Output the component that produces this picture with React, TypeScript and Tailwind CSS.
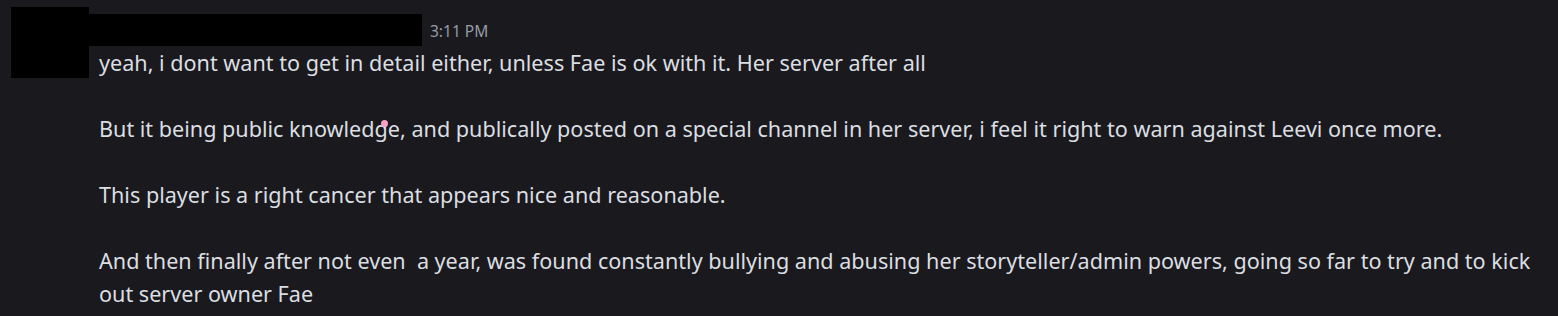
export default function App() {
  return (
    <main
      className="relative h-[316px] w-[1558px] overflow-hidden bg-[#1a1a1e] text-[#dbdee1]"
      style={{ fontFamily: '"Noto Sans", "Open Sans", sans-serif' }}
    >
      <div className="flex">
        <div className="ml-[11px] mt-[7px] h-[71px] w-[78px] shrink-0 bg-black" />

        <div className="flex flex-col">
          <div className="mt-[14px] flex items-center">
            <div className="h-[32px] w-[333px] bg-black" />
            <span className="ml-[8px] mt-[4px] text-[15.5px] text-[#949ba4]">3:11 PM</span>
          </div>

          <div className="ml-[10px] w-[1445px] text-[21.6px] leading-[33px]">
            <p>yeah, i dont want to get in detail either, unless Fae is ok with it. Her server after all</p>
            <p className="mt-[33px]">
              But it being public knowledge, and publically posted on a special channel in her server, i feel it right to warn against Leevi once more.
            </p>
            <p className="mt-[33px]">This player is a right cancer that appears nice and reasonable.</p>
            <p className="mt-[33px]">
              And then finally after not even &nbsp;a year, was found constantly bullying and abusing her storyteller/admin powers, going so far to try and to kick out server owner Fae
            </p>
          </div>
        </div>
      </div>

      {/* stray cursor dot */}
      <div className="absolute left-[381px] top-[120px] h-[7px] w-[7px] rounded-full bg-[#f4a3c6]" />
    </main>
  );
}
